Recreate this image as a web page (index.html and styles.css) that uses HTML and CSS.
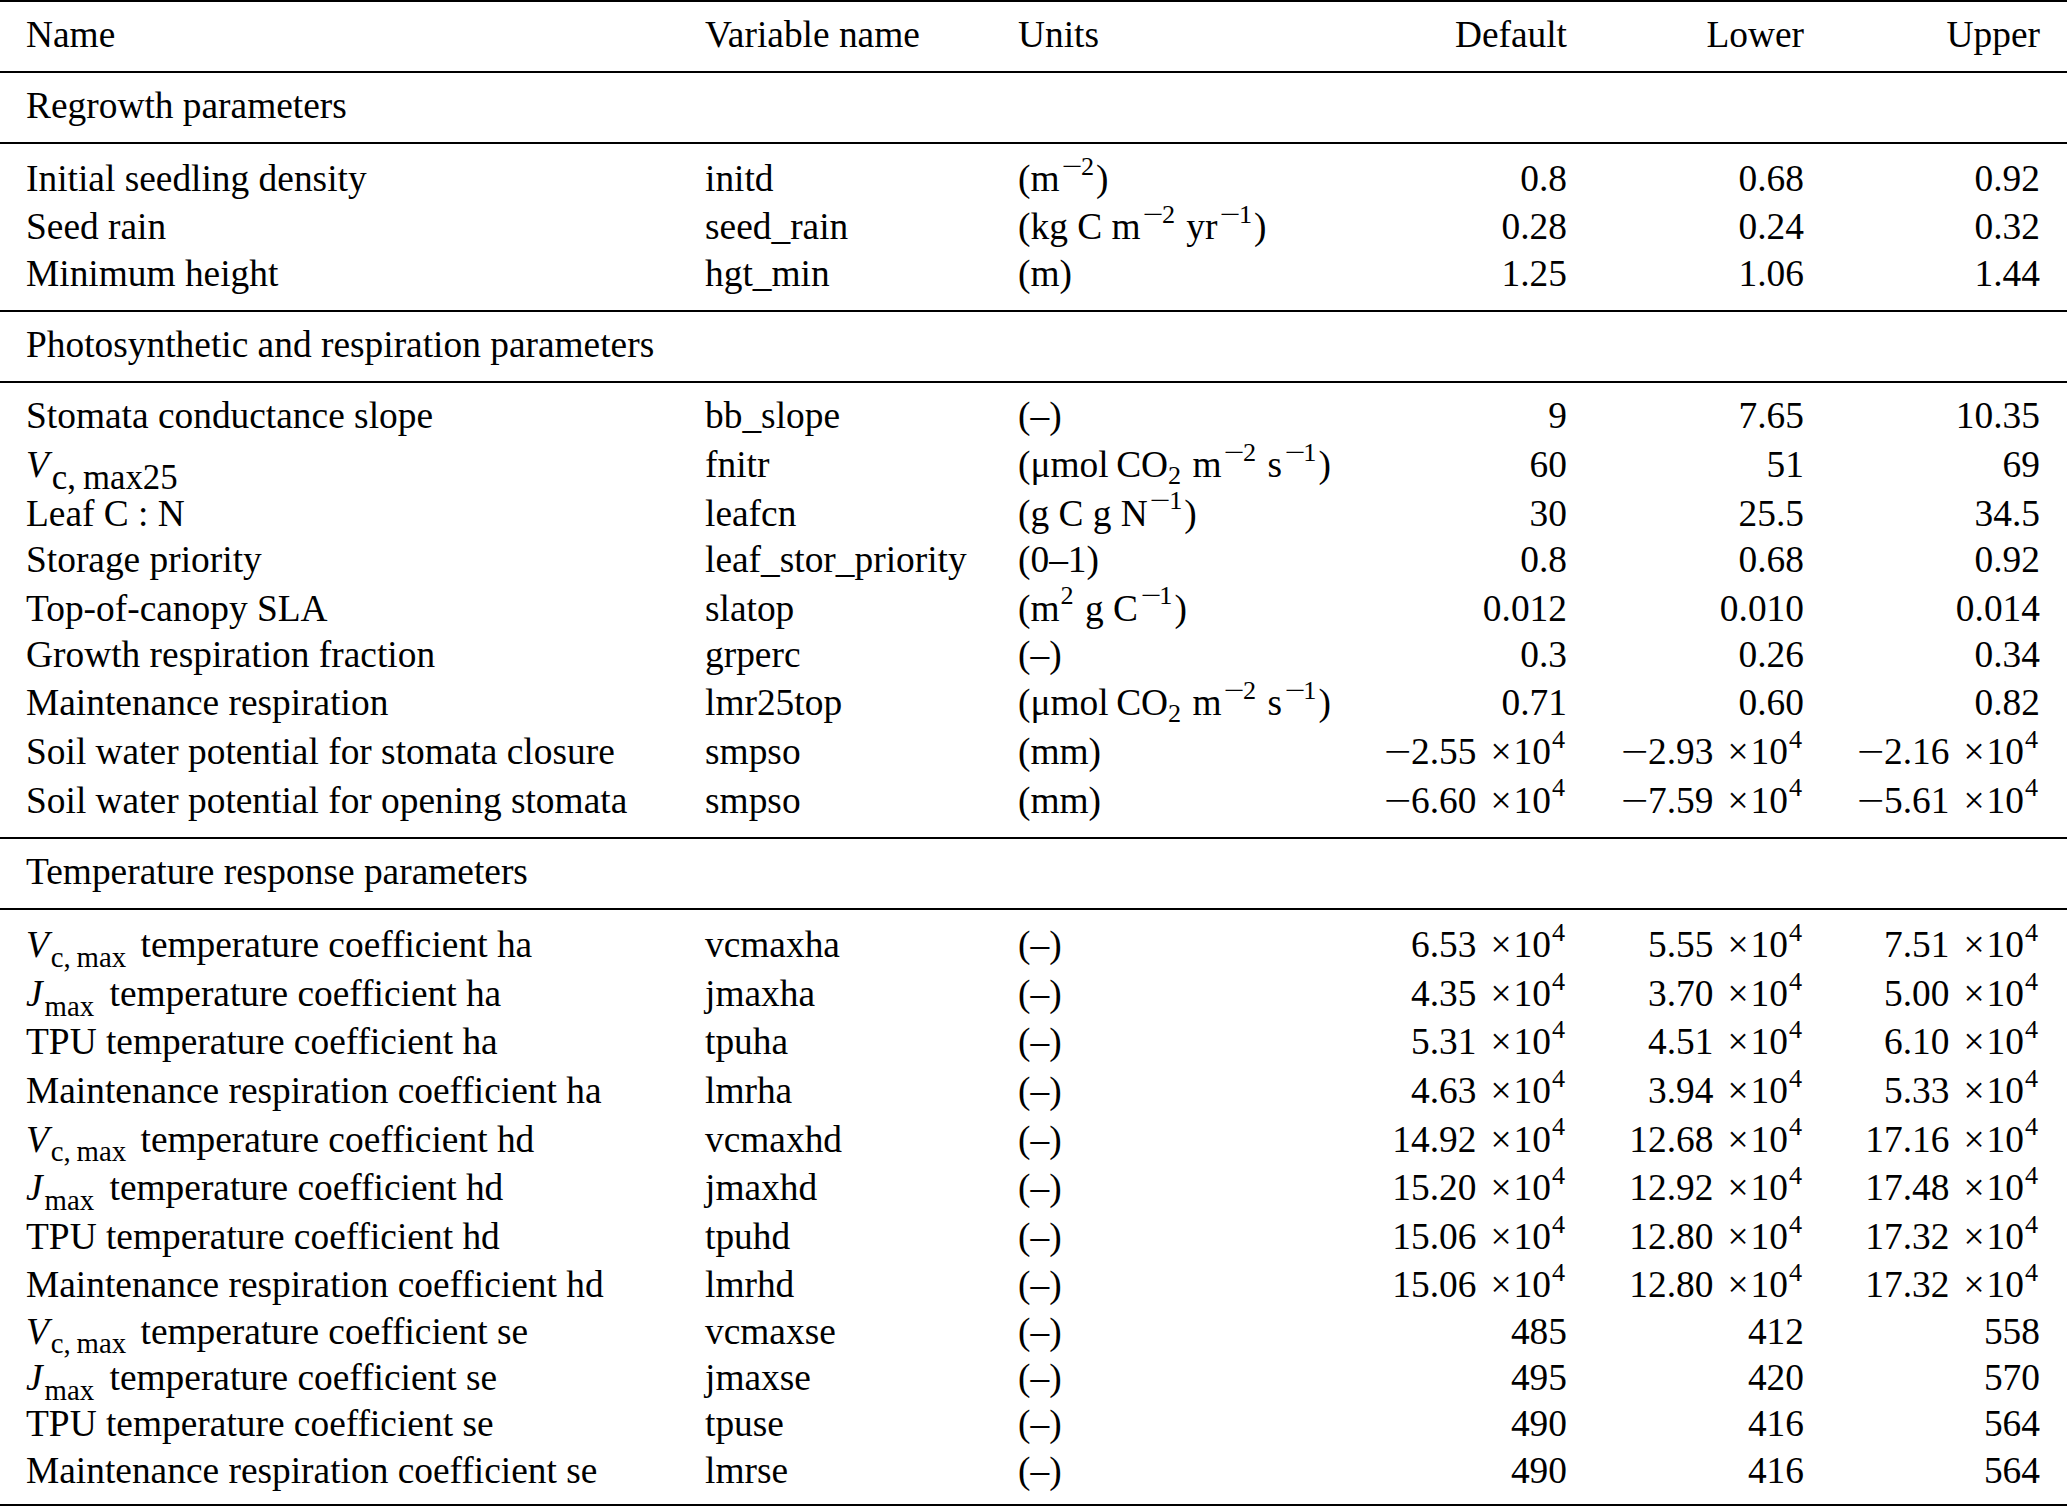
FILE: index.html
```html
<!DOCTYPE html>
<html lang="en">
<head>
<meta charset="utf-8">
<title>Parameter table</title>
<link rel="stylesheet" href="styles.css">
</head>
<body>
<table class="params">
  <colgroup>
    <col class="c-name"><col class="c-var"><col class="c-unit"><col class="c-def"><col class="c-low"><col class="c-up">
  </colgroup>
  <thead>
    <tr><th>Name</th><th>Variable name</th><th>Units</th><th class="num">Default</th><th class="num">Lower</th><th class="num last">Upper</th></tr>
  </thead>
  <tbody class="sec">
    <tr><td colspan="6">Regrowth parameters</td></tr>
  </tbody>
  <tbody class="grp">
    <tr class="hi"><td>Initial seedling density</td><td>initd</td><td>(m<sup><span class="mn">−</span>2</sup>)</td><td class="num">0.8</td><td class="num">0.68</td><td class="num last">0.92</td></tr>
    <tr class="hi"><td>Seed rain</td><td>seed_rain</td><td>(kg C m<sup><span class="mn">−</span>2</sup> yr<sup><span class="mn">−</span>1</sup>)</td><td class="num">0.28</td><td class="num">0.24</td><td class="num last">0.32</td></tr>
    <tr><td>Minimum height</td><td>hgt_min</td><td>(m)</td><td class="num">1.25</td><td class="num">1.06</td><td class="num last">1.44</td></tr>
  </tbody>
  <tbody class="sec">
    <tr><td colspan="6">Photosynthetic and respiration parameters</td></tr>
  </tbody>
  <tbody class="grp">
    <tr><td>Stomata conductance slope</td><td>bb_slope</td><td>(–)</td><td class="num">9</td><td class="num">7.65</td><td class="num last">10.35</td></tr>
    <tr class="hi"><td><i>V</i><sub class="vs big">c,&thinsp;max25</sub></td><td>fnitr</td><td>(μmol&thinsp;CO<sub>2</sub> m<sup><span class="mn">−</span>2</sup> s<sup><span class="mn">−</span>1</sup>)</td><td class="num">60</td><td class="num">51</td><td class="num last">69</td></tr>
    <tr class="hi"><td>Leaf C : N</td><td>leafcn</td><td>(g C g N<sup><span class="mn">−</span>1</sup>)</td><td class="num">30</td><td class="num">25.5</td><td class="num last">34.5</td></tr>
    <tr><td>Storage priority</td><td>leaf_stor_priority</td><td>(0–1)</td><td class="num">0.8</td><td class="num">0.68</td><td class="num last">0.92</td></tr>
    <tr class="hi"><td>Top-of-canopy SLA</td><td>slatop</td><td>(m<sup>2</sup> g C<sup><span class="mn">−</span>1</sup>)</td><td class="num">0.012</td><td class="num">0.010</td><td class="num last">0.014</td></tr>
    <tr><td>Growth respiration fraction</td><td>grperc</td><td>(–)</td><td class="num">0.3</td><td class="num">0.26</td><td class="num last">0.34</td></tr>
    <tr class="hi"><td>Maintenance respiration</td><td>lmr25top</td><td>(μmol&thinsp;CO<sub>2</sub> m<sup><span class="mn">−</span>2</sup> s<sup><span class="mn">−</span>1</sup>)</td><td class="num">0.71</td><td class="num">0.60</td><td class="num last">0.82</td></tr>
    <tr class="hi"><td>Soil water potential for stomata closure</td><td>smpso</td><td>(mm)</td><td class="num"><span class="m">−</span>2.55<span class="x">×</span>10<sup>4</sup></td><td class="num"><span class="m">−</span>2.93<span class="x">×</span>10<sup>4</sup></td><td class="num last"><span class="m">−</span>2.16<span class="x">×</span>10<sup>4</sup></td></tr>
    <tr class="hi"><td>Soil water potential for opening stomata</td><td>smpso</td><td>(mm)</td><td class="num"><span class="m">−</span>6.60<span class="x">×</span>10<sup>4</sup></td><td class="num"><span class="m">−</span>7.59<span class="x">×</span>10<sup>4</sup></td><td class="num last"><span class="m">−</span>5.61<span class="x">×</span>10<sup>4</sup></td></tr>
  </tbody>
  <tbody class="sec">
    <tr><td colspan="6">Temperature response parameters</td></tr>
  </tbody>
  <tbody class="grp final">
    <tr class="hi"><td><i>V</i><sub class="vs">c,&thinsp;max</sub> temperature coefficient ha</td><td>vcmaxha</td><td>(–)</td><td class="num">6.53<span class="x">×</span>10<sup>4</sup></td><td class="num">5.55<span class="x">×</span>10<sup>4</sup></td><td class="num last">7.51<span class="x">×</span>10<sup>4</sup></td></tr>
    <tr class="hi"><td><i>J</i><sub class="vs vj">max</sub> temperature coefficient ha</td><td>jmaxha</td><td>(–)</td><td class="num">4.35<span class="x">×</span>10<sup>4</sup></td><td class="num">3.70<span class="x">×</span>10<sup>4</sup></td><td class="num last">5.00<span class="x">×</span>10<sup>4</sup></td></tr>
    <tr class="hi"><td>TPU temperature coefficient ha</td><td>tpuha</td><td>(–)</td><td class="num">5.31<span class="x">×</span>10<sup>4</sup></td><td class="num">4.51<span class="x">×</span>10<sup>4</sup></td><td class="num last">6.10<span class="x">×</span>10<sup>4</sup></td></tr>
    <tr class="hi"><td>Maintenance respiration coefficient ha</td><td>lmrha</td><td>(–)</td><td class="num">4.63<span class="x">×</span>10<sup>4</sup></td><td class="num">3.94<span class="x">×</span>10<sup>4</sup></td><td class="num last">5.33<span class="x">×</span>10<sup>4</sup></td></tr>
    <tr class="hi"><td><i>V</i><sub class="vs">c,&thinsp;max</sub> temperature coefficient hd</td><td>vcmaxhd</td><td>(–)</td><td class="num">14.92<span class="x">×</span>10<sup>4</sup></td><td class="num">12.68<span class="x">×</span>10<sup>4</sup></td><td class="num last">17.16<span class="x">×</span>10<sup>4</sup></td></tr>
    <tr class="hi"><td><i>J</i><sub class="vs vj">max</sub> temperature coefficient hd</td><td>jmaxhd</td><td>(–)</td><td class="num">15.20<span class="x">×</span>10<sup>4</sup></td><td class="num">12.92<span class="x">×</span>10<sup>4</sup></td><td class="num last">17.48<span class="x">×</span>10<sup>4</sup></td></tr>
    <tr class="hi"><td>TPU temperature coefficient hd</td><td>tpuhd</td><td>(–)</td><td class="num">15.06<span class="x">×</span>10<sup>4</sup></td><td class="num">12.80<span class="x">×</span>10<sup>4</sup></td><td class="num last">17.32<span class="x">×</span>10<sup>4</sup></td></tr>
    <tr class="hi"><td>Maintenance respiration coefficient hd</td><td>lmrhd</td><td>(–)</td><td class="num">15.06<span class="x">×</span>10<sup>4</sup></td><td class="num">12.80<span class="x">×</span>10<sup>4</sup></td><td class="num last">17.32<span class="x">×</span>10<sup>4</sup></td></tr>
    <tr><td><i>V</i><sub class="vs">c,&thinsp;max</sub> temperature coefficient se</td><td>vcmaxse</td><td>(–)</td><td class="num">485</td><td class="num">412</td><td class="num last">558</td></tr>
    <tr><td><i>J</i><sub class="vs vj">max</sub> temperature coefficient se</td><td>jmaxse</td><td>(–)</td><td class="num">495</td><td class="num">420</td><td class="num last">570</td></tr>
    <tr><td>TPU temperature coefficient se</td><td>tpuse</td><td>(–)</td><td class="num">490</td><td class="num">416</td><td class="num last">564</td></tr>
    <tr><td>Maintenance respiration coefficient se</td><td>lmrse</td><td>(–)</td><td class="num">490</td><td class="num">416</td><td class="num last">564</td></tr>
  </tbody>
</table>
</body>
</html>
```

FILE: styles.css
```css
html, body {
  margin: 0;
  padding: 0;
  background: #fff;
  overflow: hidden;
}

.params {
  width: 2067px;
  table-layout: fixed;
  border-collapse: separate;
  border-spacing: 0;
  border-top: 2px solid #000;
  border-bottom: 2px solid #000;
  font-family: "Liberation Serif", "Times New Roman", serif;
  font-size: 37.4px;
  color: #000;
}

.c-name { width: 692px; }
.c-var { width: 313px; }
.c-unit { width: 340px; }
.c-def { width: 235px; }
.c-low { width: 237px; }
.c-up { width: 250px; }

.params th,
.params td {
  font-weight: normal;
  text-align: left;
  white-space: nowrap;
  line-height: 46.3px;
  padding: 0 0 0 13px;
  vertical-align: baseline;
}

.params th:first-child,
.params td:first-child {
  padding-left: 26px;
}

.params .num {
  text-align: right;
  padding-left: 0;
  padding-right: 13px;
}

.params .num.last {
  padding-right: 27px;
}

.params thead th {
  padding-top: 10px;
  padding-bottom: 12.7px;
}

.sec td {
  border-top: 2px solid #000;
  padding-top: 10px;
  padding-bottom: 12.7px;
}

.grp tr:first-child td {
  border-top: 2px solid #000;
  padding-top: 10px;
}

.grp tr.hi td {
  padding-top: 2.3px;
}

.grp tr.hi:first-child td {
  padding-top: 11.8px;
}

.grp tr:last-child td {
  padding-bottom: 13.5px;
}

.grp.final tr:last-child td {
  padding-bottom: 10.5px;
}

/* unary minus in front of a number: a long math minus */
.m {
  display: inline-block;
  transform: scaleX(1.3);
  transform-origin: left center;
  margin-right: 6px;
}

/* times sign of the power-of-ten notation */
.x {
  padding: 0 2px 0 14px;
}

/* minus inside a superscript: math minus is wider */
.mn {
  display: inline-block;
  transform: scaleX(1.4);
  transform-origin: left center;
  margin: 0 4px 0 1.6px;
}

sup {
  font-size: 0.7em;
  vertical-align: 0;
  position: relative;
  top: -0.62em;
  line-height: 0;
  margin-left: 1px;
  margin-right: 2px;
}

sub {
  font-size: 0.7em;
  vertical-align: 0;
  position: relative;
  top: 0.26em;
  line-height: 0;
  margin-right: 2px;
}

sub.vs {
  font-size: 0.77em;
  top: 0.34em;
  margin-left: 2px;
  margin-right: 5px;
}

sub.vs.vj {
  margin-left: 2px;
  margin-right: 6px;
}

sub.vs.big {
  font-size: 0.93em;
  top: 0.33em;
  margin-left: 3px;
}

i {
  font-style: italic;
}
```
